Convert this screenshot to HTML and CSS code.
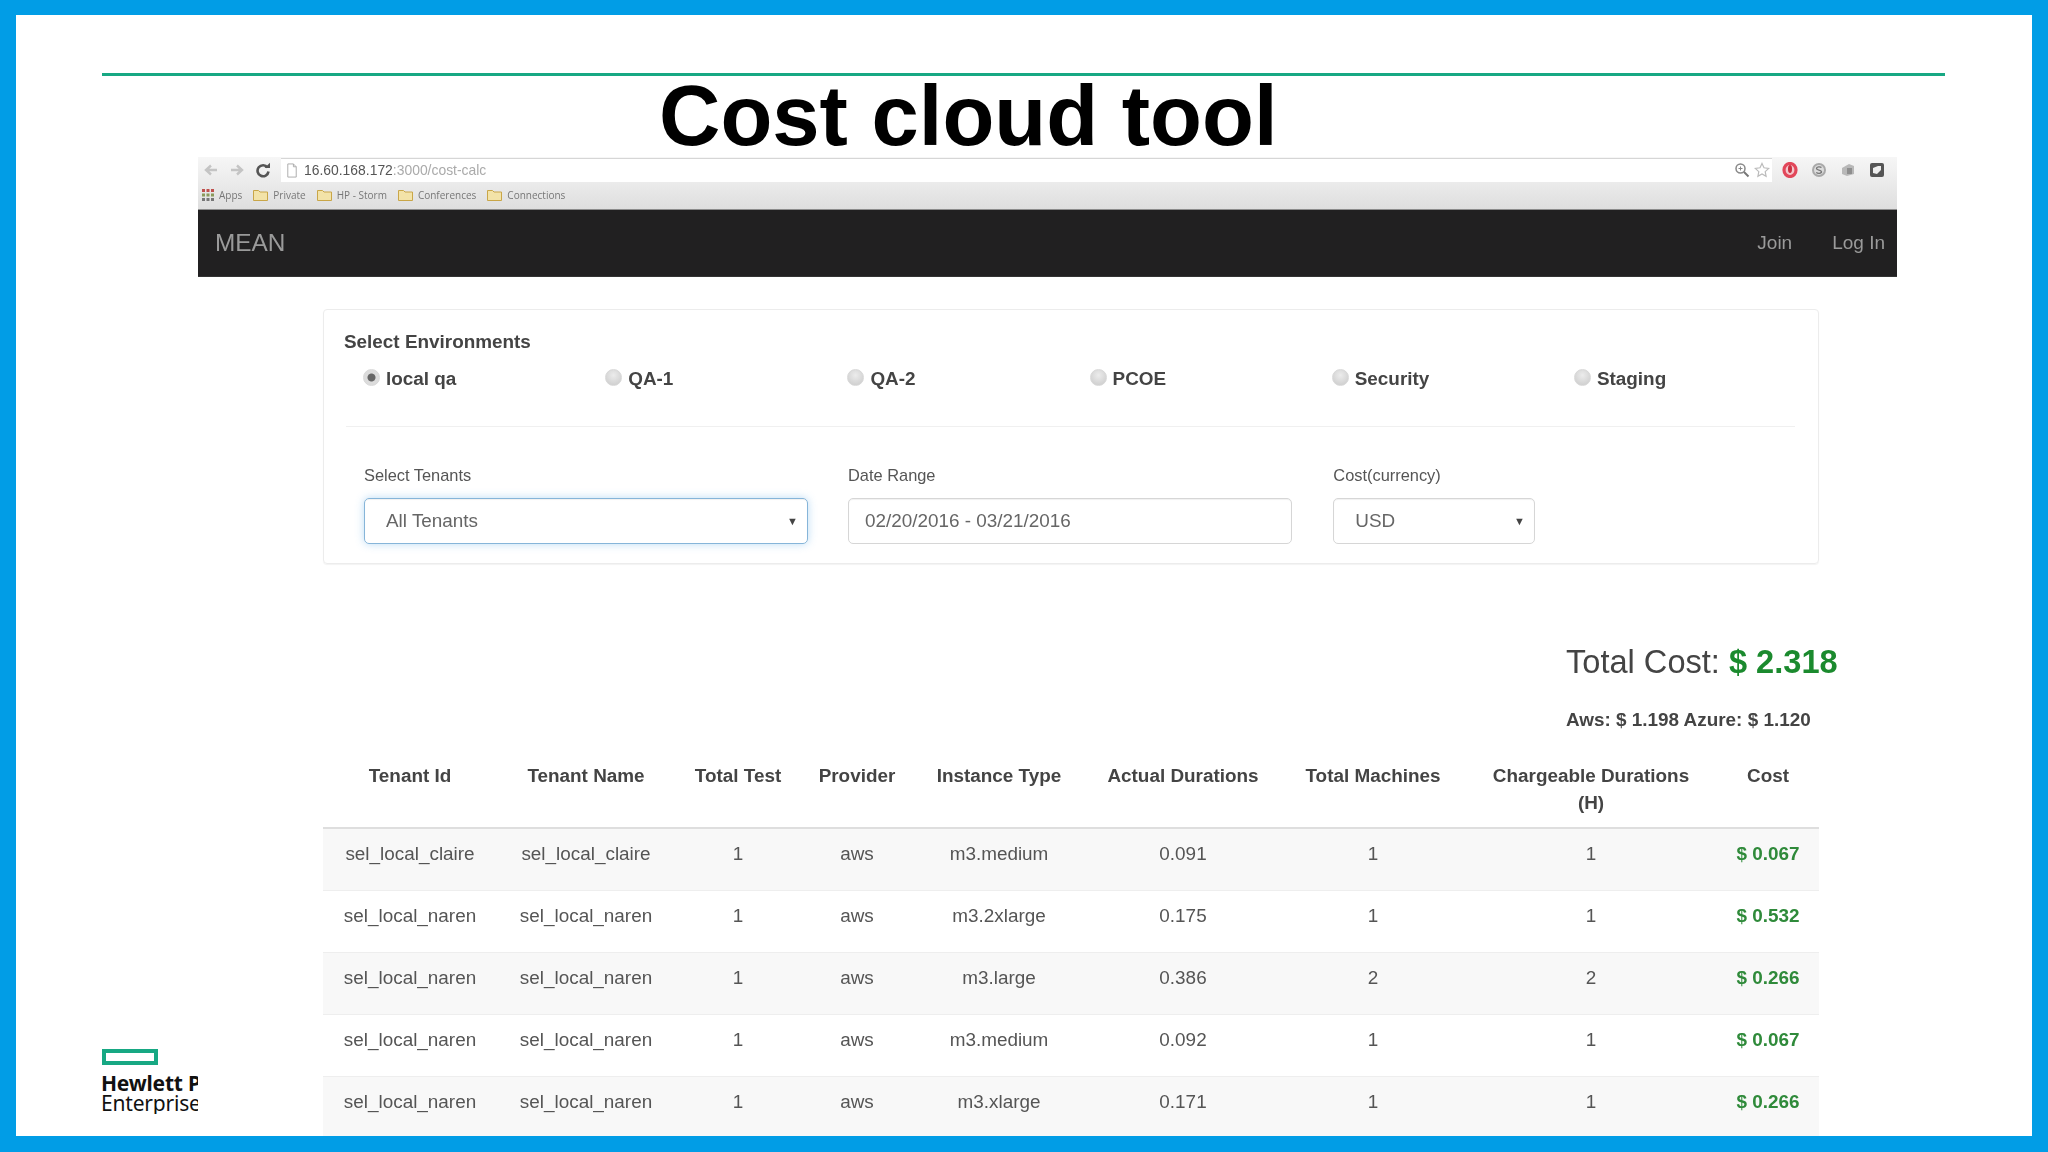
FILE: index.html
```html
<!DOCTYPE html>
<html lang="en">
<head>
<meta charset="utf-8">
<title>Cost cloud tool</title>
<link rel="stylesheet" href="styles.css">
</head>
<body>
<div class="slide">
  <div class="rule"></div>
  <h1 class="title">Cost cloud tool</h1>
  <div class="shot">
    <div class="browser">
      <div class="tabrow">
        <div class="nav-icons">
          <svg class="ic" viewBox="0 0 16 16"><path d="M14 8H4M8 3.500 3 8l5 4.500" fill="none" stroke="#c4c4c4" stroke-width="2.400"/></svg>
          <svg class="ic" viewBox="0 0 16 16"><path d="M2 8h10M8 3.500 13 8l-5 4.500" fill="none" stroke="#c4c4c4" stroke-width="2.400"/></svg>
          <svg class="ic" viewBox="0 0 16 16"><path d="M12.500 5.500A5.500 5.500 0 1 0 13.500 9.500" fill="none" stroke="#555" stroke-width="2.600"/><path d="M9.500 6h5.500V.8z" fill="#555"/></svg>
        </div>
        <div class="omnibox">
          <svg class="doc" viewBox="0 0 12 16"><path d="M1.500 1h6l3 3v11h-9zM7.500 1v3h3" fill="#fff" stroke="#aaa"/></svg>
          <span class="url">16.60.168.172<span class="url-rest">:3000/cost-calc</span></span>
          <span class="omni-right">
            <svg class="ic" viewBox="0 0 16 16"><circle cx="6.500" cy="6.500" r="4.500" fill="none" stroke="#888" stroke-width="1.500"/><path d="M10 10l4.500 4.500" stroke="#777" stroke-width="2"/><path d="M4.500 6.500h4M6.500 4.500v4" stroke="#888"/></svg>
            <svg class="ic" viewBox="0 0 16 16"><path d="M8 1.500l2 4.300 4.700.6-3.500 3.200.9 4.700L8 12l-4.100 2.300.9-4.700L1.300 6.400 6 5.800z" fill="#fff" stroke="#bbb" stroke-width="1.200"/></svg>
          </span>
        </div>
        <div class="ext-icons">
          <svg class="ic" viewBox="0 0 16 16"><ellipse cx="8" cy="8" rx="6" ry="6.500" fill="#f4c6cc" stroke="#e2475a" stroke-width="3.200"/><ellipse cx="8" cy="7" rx="2" ry="4" fill="#c9303f"/></svg>
          <svg class="ic" viewBox="0 0 16 16"><circle cx="8" cy="8" r="7" fill="#a9a9a9"/><circle cx="8" cy="8" r="5" fill="#dcdcdc"/><path d="M10.500 5.600c-1-1-5-1.200-5 1 0 2 5 1 5 3.200 0 2-4 2-5.200.6" fill="none" stroke="#777" stroke-width="1.400"/></svg>
          <svg class="ic" viewBox="0 0 16 16"><path d="M2 6l7-4 5 2v8l-7 2-5-2z" fill="#b8b8b8"/><path d="M7 6h5v6H7z" fill="#8e8e8e"/></svg>
          <svg class="ic" viewBox="0 0 16 16"><rect x="1" y="1" width="14" height="14" rx="2" fill="#555"/><path d="M4 11V6l5-2h3v4l-4 4z" fill="#eee"/></svg>
        </div>
      </div>
      <div class="bookmarks">
        <span class="bm">
          <svg class="apps" viewBox="0 0 12 12"><path d="M0 0h3v3H0zM4.500 0h3v3h-3zM9 0h3v3H9z" fill="#c0504d"/><path d="M0 4.500h3v3H0zM4.500 4.500h3v3h-3zM9 4.500h3v3H9z" fill="#8a9a5b"/><path d="M0 9h3v3H0zM4.500 9h3v3h-3zM9 9h3v3H9z" fill="#777"/></svg>Apps</span>
        <span class="bm"><svg class="folder" viewBox="0 0 15 12"><path d="M.5 1.500h5l1.500 1.500h7.500v8.500H.5z" fill="#f3e3a8" stroke="#c9a648"/></svg>Private</span>
        <span class="bm"><svg class="folder" viewBox="0 0 15 12"><path d="M.5 1.500h5l1.500 1.500h7.500v8.500H.5z" fill="#f3e3a8" stroke="#c9a648"/></svg>HP - Storm</span>
        <span class="bm"><svg class="folder" viewBox="0 0 15 12"><path d="M.5 1.500h5l1.500 1.500h7.500v8.500H.5z" fill="#f3e3a8" stroke="#c9a648"/></svg>Conferences</span>
        <span class="bm"><svg class="folder" viewBox="0 0 15 12"><path d="M.5 1.500h5l1.500 1.500h7.500v8.500H.5z" fill="#f3e3a8" stroke="#c9a648"/></svg>Connections</span>
      </div>
    </div>
    <nav class="navbar">
      <span class="brand">MEAN</span>
      <span class="nav-links"><span>Join</span><span>Log In</span></span>
    </nav>
    <main class="page">
      <section class="panel">
        <div class="panel-title">Select Environments</div>
        <div class="envs">
          <div class="env"><span class="radio radio-on"></span>local qa</div>
          <div class="env"><span class="radio"></span>QA-1</div>
          <div class="env"><span class="radio"></span>QA-2</div>
          <div class="env"><span class="radio"></span>PCOE</div>
          <div class="env"><span class="radio"></span>Security</div>
          <div class="env"><span class="radio"></span>Staging</div>
        </div>
        <div class="divider"></div>
        <div class="fields">
          <div class="field field-tenant">
            <div class="field-label">Select Tenants</div>
            <div class="control control-focus">All Tenants<span class="caret">▼</span></div>
          </div>
          <div class="field field-date">
            <div class="field-label">Date Range</div>
            <div class="control control-date">02/20/2016 - 03/21/2016</div>
          </div>
          <div class="field field-cost">
            <div class="field-label">Cost(currency)</div>
            <div class="control">USD<span class="caret">▼</span></div>
          </div>
        </div>
      </section>
      <div class="summary">
        <div class="total">Total Cost: <b class="total-val">$ 2.318</b></div>
        <div class="split">Aws: $ 1.198 Azure: $ 1.120</div>
      </div>
      <table class="costs">
        <thead>
          <tr><th>Tenant Id</th><th>Tenant Name</th><th>Total Test</th><th>Provider</th><th>Instance Type</th><th>Actual Durations</th><th>Total Machines</th><th class="th-wrap">Chargeable Durations (H)</th><th>Cost</th></tr>
        </thead>
        <tbody>
          <tr><td>sel_local_claire</td><td>sel_local_claire</td><td>1</td><td>aws</td><td>m3.medium</td><td>0.091</td><td>1</td><td>1</td><td class="money">$ 0.067</td></tr>
          <tr><td>sel_local_naren</td><td>sel_local_naren</td><td>1</td><td>aws</td><td>m3.2xlarge</td><td>0.175</td><td>1</td><td>1</td><td class="money">$ 0.532</td></tr>
          <tr><td>sel_local_naren</td><td>sel_local_naren</td><td>1</td><td>aws</td><td>m3.large</td><td>0.386</td><td>2</td><td>2</td><td class="money">$ 0.266</td></tr>
          <tr><td>sel_local_naren</td><td>sel_local_naren</td><td>1</td><td>aws</td><td>m3.medium</td><td>0.092</td><td>1</td><td>1</td><td class="money">$ 0.067</td></tr>
          <tr><td>sel_local_naren</td><td>sel_local_naren</td><td>1</td><td>aws</td><td>m3.xlarge</td><td>0.171</td><td>1</td><td>1</td><td class="money">$ 0.266</td></tr>
        </tbody>
      </table>
    </main>
  </div>
  <div class="logo">
    <div class="logo-mark"></div>
    <div class="logo-name">Hewlett P</div>
    <div class="logo-sub">Enterprise</div>
  </div>
</div>
</body>
</html>
```
FILE: styles.css
```css
* { box-sizing: border-box; }
html, body { margin: 0; padding: 0; }
body { width: 2048px; height: 1152px; overflow: hidden; background: #fff; font-family: "Liberation Sans", Arial, sans-serif; }

.slide {
  position: relative;
  width: 2048px;
  height: 1152px;
  border: 16px solid #019de6;
  border-top-width: 15px;
  background: #fff;
  overflow: hidden;
}
.rule { width: 1843px; height: 3px; margin: 58px 0 0 86px; background: #17a883; }
.title {
  margin: 0 0 1px 643px;
  font-size: 85px;
  line-height: 80px;
  font-weight: 700;
  color: #000;
  white-space: nowrap;
}

.shot { width: 1699px; margin-left: 182px; filter: blur(0.7px); background: #fff; position: relative; z-index: 1; }

.browser { height: 52px; background: linear-gradient(#f6f6f6, #ececec 45%, #dedede); }
.tabrow { height: 25px; display: flex; align-items: center; padding-left: 5px; }
.nav-icons { display: flex; gap: 10px; width: 78px; }
.ic { width: 16px; height: 16px; display: block; flex: none; }
.omnibox {
  width: 1491px;
  height: 24px;
  background: #fff;
  border-top: 1px solid #d6d6d6;
  display: flex;
  align-items: center;
  padding-left: 5px;
}
.doc { width: 12px; height: 15px; margin-right: 6px; }
.url { font-size: 13.900px; color: #555; white-space: nowrap; }
.url-rest { color: #aaa; }
.omni-right { margin-left: auto; display: flex; gap: 4px; padding-right: 2px; }
.ext-icons { display: flex; gap: 13px; margin-left: 10px; }

.bookmarks { height: 25px; display: flex; align-items: center; gap: 11px; padding-left: 4px; font-family: "Open Sans", sans-serif; font-size: 10px; color: #777; }
.bm { display: flex; align-items: center; gap: 5px; white-space: nowrap; }
.apps { width: 12px; height: 12px; }
.folder { width: 15px; height: 12px; }

.navbar {
  height: 68px;
  background: #212021;
  display: flex;
  align-items: center;
  justify-content: space-between;
  padding: 0 12px 0 17px;
  border-top: 1px solid #8c8c8c;
  border-bottom: 1px solid #333;
  color: #9a9a9a;
}
.brand { font-size: 24.400px; }
.nav-links { display: flex; gap: 40px; font-size: 19px; }

.page { padding: 32px 78px 0 125px; height: 859px; overflow: hidden; }

.panel {
  height: 255px;
  border: 1px solid #ececec;
  border-radius: 4px;
  padding: 21px 23px 0 20px;
  color: #444;
  box-shadow: 0 1px 1px rgba(0, 0, 0, .05);
}
.panel-title { font-size: 18.900px; line-height: 22px; font-weight: 700; }
.envs { display: grid; grid-template-columns: repeat(6, 242.200px); margin: 14px 0 0 19px; }
.env { display: flex; align-items: center; font-size: 18.900px; line-height: 24px; font-weight: 700; gap: 6px; }
.radio {
  width: 17px;
  height: 17px;
  border-radius: 50%;
  margin-top: -3px;
  background: radial-gradient(circle at 50% 35%, #ececec, #c9c9c9);
  border: 1px solid #d8d8d8;
}
.radio-on { background: radial-gradient(circle, #666 0 3.500px, #dcdcdc 4.500px); }
.divider { height: 1px; background: #f0f0f0; margin: 35px 0 0 2px; }
.fields { display: flex; gap: 40px; margin: 37px 0 0 20px; }
.field-tenant, .field-date { width: 444px; }
.field-cost { width: 201.500px; margin-left: 1.300px; }
.field-label { font-size: 16.400px; line-height: 22px; color: #555; }
.control {
  position: relative;
  height: 46px;
  margin-top: 12px;
  border: 1px solid #d6d6d6;
  border-radius: 5px;
  padding-left: 21px;
  font-size: 18.900px;
  line-height: 44px;
  color: #666;
  box-shadow: inset 0 1px 1px rgba(0, 0, 0, .06);
}
.control-date { padding-left: 16px; }
.control-focus { border-color: #86b5d9; box-shadow: 0 0 8px rgba(102, 175, 233, .45), inset 0 1px 1px rgba(0, 0, 0, .06); }
.caret { position: absolute; right: 9px; top: 0; font-size: 11px; color: #444; }

.summary { margin: 78px 0 0 1243px; white-space: nowrap; }
.total { font-size: 32.600px; line-height: 40px; color: #444; }
.total-val { color: #1b8a2e; }
.split { margin-top: 26px; font-size: 18.900px; line-height: 24px; font-weight: 700; color: #444; }

.costs { width: 100%; margin-top: 20px; border-collapse: collapse; table-layout: fixed; font-size: 18.900px; text-align: center; color: #555; }
.costs th { padding: 10px 0 11px; line-height: 27px; font-weight: 700; color: #444; vertical-align: top; border-bottom: 2px solid #dedede; }
.costs .th-wrap { padding-left: 20px; padding-right: 20px; }
.costs td { height: 62px; padding: 12px 0 0; line-height: 26px; vertical-align: top; border-top: 1px solid #eee; }
.costs tbody tr:first-child td { border-top: 0; }
.costs tbody tr:nth-child(odd) { background: #f8f8f8; }
.costs th:nth-child(1) { width: 174px; }
.costs th:nth-child(2) { width: 178px; }
.costs th:nth-child(3) { width: 126px; }
.costs th:nth-child(4) { width: 112px; }
.costs th:nth-child(5) { width: 172px; }
.costs th:nth-child(6) { width: 196px; }
.costs th:nth-child(7) { width: 184px; }
.costs th:nth-child(8) { width: 252px; }
.costs th:nth-child(9) { width: 102px; }
.costs .money { color: #2f8a3a; font-weight: 700; }

.logo { position: absolute; left: 85px; top: 1034px; width: 97px; overflow: hidden; white-space: nowrap; color: #111; }
.logo-mark { width: 56px; height: 16px; margin-left: 1px; border: 4px solid #17a883; }
.logo-name { margin-top: 8px; font-family: "Noto Sans", sans-serif; font-size: 21px; line-height: 20px; font-weight: 700; letter-spacing: -0.2px; }
.logo-sub { font-family: "Noto Sans", sans-serif; font-size: 21px; line-height: 21px; letter-spacing: -0.2px; }
```
